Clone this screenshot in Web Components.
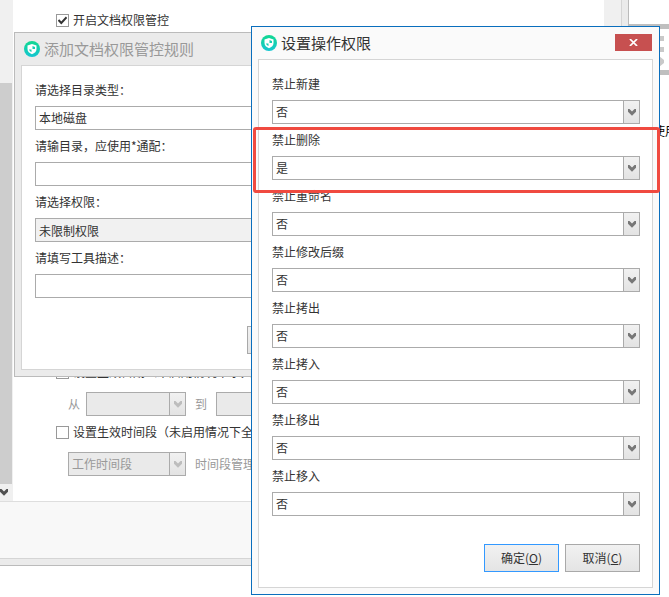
<!DOCTYPE html>
<html lang="zh-CN">
<head>
<meta charset="utf-8">
<meta name="viewport" content="width=device-width, initial-scale=1">
<title>设置操作权限</title>
<style>
  :root {
    --text: #333;
    --muted: #999;
    --line: #ababab;
    --panel-line: #d5d5d5;
    --frame: #ebebeb;
    --disabled: #eaeaea;
  }
  body {
    margin: 0;
    background: #fff;
    color: var(--text);
    font: 12px/20px "Noto Sans CJK SC", "Noto Sans", sans-serif;
    overflow: hidden;
  }
</style>
</head>
<body>

<policy-desktop>
  <policy-window slot="base">
    <tick-option checked>开启文档权限管控</tick-option>
    <rule-space></rule-space>
    <tick-option>设置生效日期（未启用情况下永久有效）</tick-option>
    <option-row range>
      <span>从</span>
      <drop-down name="生效开始日期" options="" disabled></drop-down>
      <span>到</span>
      <drop-down name="生效结束日期" options="" disabled></drop-down>
    </option-row>
    <tick-option>设置生效时间段（未启用情况下全天有效）</tick-option>
    <option-row>
      <drop-down name="时间段" options="工作时间段" disabled></drop-down>
      <span>时间段管理</span>
    </option-row>
  </policy-window>

  <side-rail slot="rail">使用</side-rail>

  <tool-dialog slot="back" heading="添加文档权限管控规则" inactive>
    <form-field type="select" options="本地磁盘,网络磁盘">请选择目录类型：</form-field>
    <form-field type="text">请输目录，应使用*通配：</form-field>
    <form-field type="text" value="未限制权限" readonly>请选择权限：</form-field>
    <form-field type="text">请填写工具描述：</form-field>
    <push-button slot="actions" key="O">确定</push-button>
    <push-button slot="actions" key="C">取消</push-button>
  </tool-dialog>

  <tool-dialog slot="front" heading="设置操作权限">
    <form-field type="select" options="否,是">禁止新建</form-field>
    <form-field type="select" options="是,否">禁止删除</form-field>
    <form-field type="select" options="否,是">禁止重命名</form-field>
    <form-field type="select" options="否,是">禁止修改后缀</form-field>
    <form-field type="select" options="否,是">禁止拷出</form-field>
    <form-field type="select" options="否,是">禁止拷入</form-field>
    <form-field type="select" options="否,是">禁止移出</form-field>
    <form-field type="select" options="否,是">禁止移入</form-field>
    <push-button slot="actions" key="O" primary>确定</push-button>
    <push-button slot="actions" key="C">取消</push-button>
  </tool-dialog>
</policy-desktop>

<script>
const CHEVRON = `
  <svg width="8" height="7" viewBox="0 0 8 7" aria-hidden="true">
    <path d="M0 0h1.500L4 2.600 6.500 0H8v2.700L4 6.700 0 2.700Z" fill="currentColor"/>
  </svg>`;

// Small base: renders once into an open shadow root
class UiElement extends HTMLElement {
  connectedCallback() {
    if (this.shadowRoot) return;
    this.attachShadow({ mode: 'open', delegatesFocus: this.constructor.formAssociated === true });
    this.shadowRoot.innerHTML = `<style>*{box-sizing:border-box}</style>${this.render()}`;
  }

  attr(name) {
    return (this.getAttribute(name) || '').replace(/&/g, '&amp;').replace(/</g, '&lt;').replace(/"/g, '&quot;');
  }
}

/* Drop-down list */
class DropDown extends UiElement {
  // makes the element labelable, so <label for> focuses the inner select
  static formAssociated = true;

  render() {
    const options = this.attr('options').split(',').map(o => `<option>${o}</option>`).join('');
    return `
      <style>
        :host { display: block; }
        .box { display: grid; height: 24px; border: 1px solid var(--line); background: #fff; }
        select, .arrow { grid-area: 1 / 1; }
        select {
          appearance: none;
          width: 100%;
          margin: 0;
          padding: 0 20px 0 3px;
          border: 0;
          border-radius: 0;
          background: transparent;
          color: var(--text);
          font: inherit;
          opacity: 1;
        }
        .arrow {
          justify-self: end;
          display: flex;
          align-items: center;
          justify-content: center;
          width: 16px;
          border-left: 1px solid var(--line);
          background: linear-gradient(#f1f1f1, #e3e3e3);
          color: #777;
          pointer-events: none;
        }
        :host([disabled]) .box { background: var(--disabled); }
        :host([disabled]) select { color: var(--muted); }
        :host([disabled]) .arrow { color: #bdbdbd; }
      </style>
      <div class="box">
        <select aria-label="${this.attr('name')}" ${this.hasAttribute('disabled') ? 'disabled' : ''}>${options}</select>
        <span class="arrow">${CHEVRON}</span>
      </div>
    `;
  }
}

/* Label above a drop-down or a text box */
class FormField extends UiElement {
  render() {
    const isSelect = this.getAttribute('type') === 'select';
    const control = isSelect
      ? `<drop-down id="control" name="${this.textContent.trim()}" options="${this.attr('options')}"></drop-down>`
      : `<input id="control" type="text" value="${this.attr('value')}" ${this.hasAttribute('readonly') ? 'readonly' : ''}>`;
    return `
      <style>
        :host { display: block; }
        label { display: block; }
        .field { display: flex; flex-direction: column; gap: 6px; }
        input {
          width: 100%;
          height: 24px;
          margin: 0;
          padding: 0 3px;
          border: 1px solid var(--line);
          border-radius: 0;
          background: #fff;
          color: var(--text);
          font: inherit;
        }
        input:read-only { background: #f1f1f1; }
      </style>
      <div class="field">
        <label for="control"><slot></slot></label>
        ${control}
      </div>
    `;
  }
}

/* Tick box with its text */
class TickOption extends UiElement {
  render() {
    return `
      <style>
        :host { display: block; }
        label { display: flex; align-items: center; gap: 4px; white-space: nowrap; }
        .tick { display: grid; place-items: center; width: 13px; height: 13px; }
        .tick > * { grid-area: 1 / 1; }
        input {
          appearance: none;
          width: 13px;
          height: 13px;
          margin: 0;
          border: 1px solid #999;
          background: #fff;
        }
        svg { visibility: hidden; pointer-events: none; }
        input:checked + svg { visibility: visible; }
      </style>
      <label>
        <span class="tick">
          <input type="checkbox" ${this.hasAttribute('checked') ? 'checked' : ''}>
          <svg width="9" height="9" viewBox="0 0 9 9" fill="none" aria-hidden="true">
            <path d="M.5 4 3.300 7 8.600 1.300" stroke="#333" stroke-width="2"/>
          </svg>
        </span>
        <span><slot></slot></span>
      </label>
    `;
  }
}

class OptionRow extends UiElement {
  render() {
    return `
      <style>
        :host {
          display: grid;
          grid-template-columns: 118px auto;
          align-items: center;
          justify-content: start;
          column-gap: 9px;
          padding: 10px 0 6px 12px;
          color: var(--muted);
          white-space: nowrap;
        }
        /* from / to pair: text and list side by side, twice */
        :host([range]) { grid-template-columns: 9px 100px 12px 100px; }
      </style>
      <slot></slot>
    `;
  }
}

class RuleSpace extends UiElement {
  render() {
    return `<style>:host { display: block; min-height: 332px; }</style>`;
  }
}

class PushButton extends UiElement {
  render() {
    return `
      <style>
        :host { display: block; }
        button {
          width: 75px;
          height: 28px;
          margin: 0;
          padding: 0;
          border: 1px solid #a9a9a9;
          border-radius: 0;
          background: linear-gradient(#f1f1f1, #e4e4e4);
          color: var(--text);
          font: inherit;
        }
        :host([primary]) button { border-color: #3399ff; }
      </style>
      <button type="button"><slot></slot>(<u>${this.attr('key')}</u>)</button>
    `;
  }
}

class ShieldLogo extends UiElement {
  render() {
    return `
      <style>:host { display: block; height: 16px; }</style>
      <svg width="16" height="16" viewBox="0 0 16 16" aria-hidden="true">
        <defs>
          <linearGradient id="g" x1="0" y1="0" x2="0" y2="1">
            <stop offset="0" stop-color="#12d890"/>
            <stop offset="1" stop-color="#14c6d2"/>
          </linearGradient>
        </defs>
        <circle cx="8" cy="8" r="8" fill="url(#g)"/>
        <path d="M8 3 12.500 4.500V8c0 2.400-1.800 4.200-4.500 5.300C5.300 12.200 3.500 10.400 3.500 8V4.500Z" fill="#fff"/>
        <path d="M8.500 5 11 5.900V8H8.500ZM7.500 8.500V11C6 10.300 5.200 9.500 5 8.500Z" fill="#14ceb2"/>
      </svg>
    `;
  }
}

/* Window frame with title bar, inner panel and button row */
class ToolDialog extends UiElement {
  render() {
    const close = this.hasAttribute('inactive') ? '' : `
      <button class="close" type="button" aria-label="关闭">
        <svg width="9" height="7" viewBox="0 0 9 7" fill="none" aria-hidden="true">
          <path d="M.9 0 8.100 7M8.100 0 .9 7" stroke="#fff" stroke-width="1.700"/>
        </svg>
      </button>`;
    return `
      <style>
        :host {
          display: block;
          box-sizing: border-box;
          padding: 0 6px 6px;
          border: 1px solid #0a6ebd;
          background: #fafafa;
        }
        header { display: flex; align-items: center; gap: 4px; height: 32px; padding: 0 1px 0 3px; }
        h2 { flex: 1; margin: 0; font-size: 15px; font-weight: 400; line-height: 20px; white-space: nowrap; }
        .close {
          display: flex;
          align-items: center;
          justify-content: center;
          align-self: flex-start;
          width: 37px;
          height: 17px;
          margin: 7px 0 0;
          padding: 0;
          border: 0;
          background: #c75050;
        }
        .panel { padding: 14px 12px 15px 13px; border: 1px solid var(--panel-line); background: #fff; }
        .fields { display: flex; flex-direction: column; gap: 6px; }
        footer { display: flex; justify-content: flex-end; gap: 6px; margin-top: 28px; }
        :host([inactive]) { border-color: #bbb; background: var(--frame); }
        :host([inactive]) h2 { color: var(--muted); }
      </style>
      <header>
        <shield-logo></shield-logo>
        <h2>${this.attr('heading')}</h2>
        ${close}
      </header>
      <div class="panel">
        <div class="fields"><slot></slot></div>
        <footer><slot name="actions"></slot></footer>
      </div>
    `;
  }
}

/* Main policy window: tree scroll bar, options, scroll bar, footer */
class PolicyWindow extends UiElement {
  render() {
    return `
      <style>
        :host { display: block; border: solid #bbb; border-width: 0 1px 1px 0; background: var(--frame); padding: 0 6px 6px 0; }
        .inner { border: solid var(--panel-line); border-width: 0 1px 1px 0; background: #f8f8f8; }
        .body { display: flex; border-bottom: 1px solid #dedede; background: #fff; }
        .bar { flex: none; display: flex; flex-direction: column; width: 13px; background: #f0f0f0; }
        .bar.right { width: 17px; }
        .thumb { flex: 1; width: 12px; margin-top: 83px; background: #cdcdcd; }
        .down { display: flex; align-items: center; height: 17px; color: #505050; }
        .content { flex: 1; min-width: 0; padding: 10px 0 19px 43px; overflow: hidden; }
        .foot { height: 56px; }
      </style>
      <div class="inner">
        <div class="body">
          <div class="bar"><div class="thumb"></div><div class="down">${CHEVRON}</div></div>
          <div class="content"><slot></slot></div>
          <div class="bar right"></div>
        </div>
        <div class="foot"></div>
      </div>
    `;
  }
}

/* Strip of the window that lies behind, at the right edge */
class SideRail extends UiElement {
  render() {
    return `
      <style>
        :host { display: block; color: #000; overflow: hidden; white-space: nowrap; }
        .top { height: 24px; }
        .rule { height: 5px; background: #bfbfbf; }
        .tools { display: flex; justify-content: flex-end; height: 41px; padding: 0 5px 0 0; }
        .text { margin: 46px 0 0; padding-left: 24px; }
      </style>
      <div class="top"></div>
      <div class="rule"></div>
      <div class="tools">
        <svg width="12" height="41" viewBox="0 0 12 41" aria-hidden="true">
          <path d="M0 7h12v5H0ZM0 18h12v5H0ZM0 30h7v-3l5 4v3l-5 4v-3H0Z" fill="#c9c9c9"/>
        </svg>
      </div>
      <div class="rule"></div>
      <p class="text"><slot></slot></p>
    `;
  }
}

class PolicyDesktop extends UiElement {
  render() {
    return `
      <style>
        :host { display: block; position: relative; min-height: 100vh; }
        .base { display: grid; grid-template-columns: minmax(0, 1fr) 40px; align-items: start; }
        slot[name="back"]::slotted(*) { position: absolute; left: 14px; top: 32px; width: 409px; }
        slot[name="front"]::slotted(*) { position: absolute; left: 251px; right: 9px; top: 26px; }
        .mark {
          position: absolute;
          left: 253px;
          right: 9px;
          top: 127px;
          height: 66px;
          border: 3px solid #f04a40;
          border-radius: 3px;
          pointer-events: none;
        }
      </style>
      <div class="base">
        <slot name="base"></slot>
        <slot name="rail"></slot>
      </div>
      <slot name="back"></slot>
      <slot name="front"></slot>
      <div class="mark"></div>
    `;
  }
}

customElements.define('drop-down', DropDown);
customElements.define('form-field', FormField);
customElements.define('tick-option', TickOption);
customElements.define('option-row', OptionRow);
customElements.define('rule-space', RuleSpace);
customElements.define('push-button', PushButton);
customElements.define('shield-logo', ShieldLogo);
customElements.define('tool-dialog', ToolDialog);
customElements.define('policy-window', PolicyWindow);
customElements.define('side-rail', SideRail);
customElements.define('policy-desktop', PolicyDesktop);
</script>
</body>
</html>
